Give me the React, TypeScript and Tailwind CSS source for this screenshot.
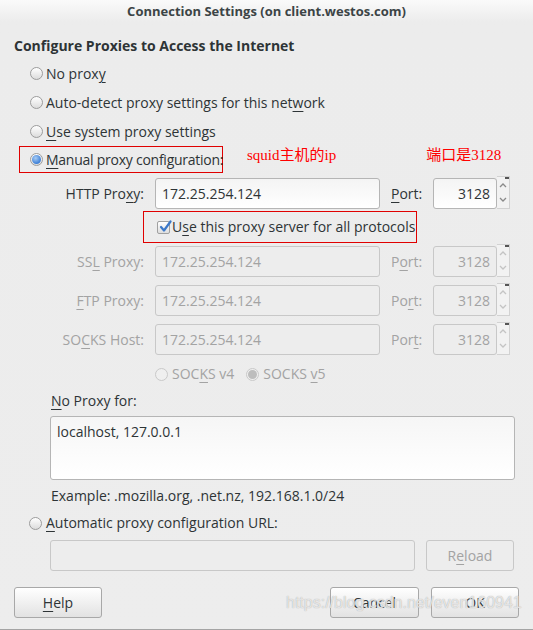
import React from 'react';

const dark = 'text-[#2e3436]';
const dim = 'text-[#a3a3a3]';

function U({ c }: { c: string }) {
  return <span className="underline underline-offset-[3px] decoration-1">{c}</span>;
}

function Radio({ on = false, off = false }: { on?: boolean; off?: boolean }) {
  return (
    <span className={`inline-flex w-[13px] h-[13px] shrink-0 rounded-full border items-center justify-center ${off ? 'border-[#c9c9c9] bg-[#efefef]' : 'border-[#9c9c9c] bg-gradient-to-b from-white to-[#dcdcdc]'}`}>
      {on && (
        <span className={`w-[9px] h-[9px] rounded-full ${off ? 'bg-[#bdbdbd]' : 'bg-[radial-gradient(circle_at_40%_35%,#a8cdf5,#3d7fd6_70%)]'}`} />
      )}
    </span>
  );
}

function Spin({ off = false }: { off?: boolean }) {
  const c = off ? '#c4c4c4' : '#8a8a8a';
  return (
    <div className="relative flex flex-col w-[13px] h-[33px] -mt-[2px] border border-l-0 border-[#d2d2d2] bg-[#f2f2f2]">
      <span className="absolute right-0 top-0 w-[4px] h-[2px] bg-[#555]" />
      <div className="flex-1 flex items-center justify-center">
        <svg width="8" height="6" viewBox="0 0 8 6"><path d="M1 5 L4 2 L7 5" fill="none" stroke={c} strokeWidth="1.3" /></svg>
      </div>
      <div className="flex-1 flex items-center justify-center">
        <svg width="8" height="6" viewBox="0 0 8 6"><path d="M1 1 L4 4 L7 1" fill="none" stroke={c} strokeWidth="1.3" /></svg>
      </div>
    </div>
  );
}

function FieldRow({ label, port, off = false, mt }: { label: React.ReactNode; port: React.ReactNode; off?: boolean; mt: string }) {
  const box = off
    ? 'border-[#c8c8c8] bg-[#ededed] text-[#a3a3a3]'
    : 'border-[#b5b5b5] bg-gradient-to-b from-[#f4f4f4] to-white text-[#2e3436]';
  return (
    <div className={`flex items-center h-[31px] ${mt}`}>
      <div className={`w-[144px] text-right whitespace-nowrap ${off ? dim : dark}`}>{label}</div>
      <div className={`ml-[11px] w-[225px] h-[31px] rounded-[3px] border flex items-center pl-[6px] ${box}`}>172.25.254.124</div>
      <div className={`ml-[11px] w-[42px] ${off ? dim : dark}`}>{port}</div>
      <div className={`w-[64px] h-[31px] rounded-[3px] border flex items-center justify-end pr-[6px] ${box}`}>3128</div>
      <Spin off={off} />
    </div>
  );
}

function Btn({ children, w, off = false }: { children: React.ReactNode; w: string; off?: boolean }) {
  return (
    <div className={`${w} h-[31px] rounded-[3px] border flex items-center justify-center ${off ? 'border-[#c8c8c8] bg-[#ededed] text-[#a3a3a3]' : 'border-[#a8a8a8] bg-gradient-to-b from-white to-[#e2e2e2] text-[#2e3436]'}`}>
      {children}
    </div>
  );
}

const redFont = { fontFamily: '"Liberation Serif", "Noto Sans CJK SC", serif' };

export default function App() {
  return (
    <div className="relative w-[533px] h-[630px] bg-[#ededed] overflow-hidden text-[14px] leading-[20px]" style={{ fontFamily: '"Open Sans", "Noto Sans", sans-serif' }}>
      {/* title bar */}
      <div className="h-[22px] bg-gradient-to-b from-[#fafafa] to-[#ececec] flex items-center justify-center">
        <span className="text-[13px] font-bold text-[#3c4446]">Connection Settings (on client.westos.com)</span>
      </div>
      <div className="bg-gradient-to-b from-[#ececec] to-[#ededed]">
        <div className={`h-[34px] pt-[14px] pl-[14px] font-bold ${dark}`}>Configure Proxies to Access the Internet</div>

        <div className={`mt-[3px] ${dark}`}>
          <div className="h-[29px] pl-[30px] flex items-center gap-[3px]"><Radio /><span>No prox<U c="y" /></span></div>
          <div className="h-[29px] pl-[30px] flex items-center gap-[3px]"><Radio /><span>Auto-detect proxy settings for this net<U c="w" />ork</span></div>
          <div className="h-[29px] pl-[30px] flex items-center gap-[3px]"><Radio /><span><U c="U" />se system proxy settings</span></div>
          <div className="h-[29px] pl-[19px] flex items-center">
            <div className="w-[204px] h-[27px] -mt-[2px] border border-[#e00000] pl-[10px] flex items-center gap-[3px] whitespace-nowrap">
              <Radio on /><span className="tracking-[-0.25px]"><U c="M" />anual proxy configuration:</span>
            </div>
            <span className="ml-[24px] -mt-[12px] text-[15px] text-[#ff0000]" style={redFont}>squid主机的ip</span>
            <span className="ml-[90px] -mt-[12px] text-[15px] text-[#ff0000]" style={redFont}>端口是3128</span>
          </div>
        </div>

        <FieldRow mt="mt-[3px]" label={<>HTTP Pro<U c="x" />y:</>} port={<><U c="P" />ort:</>} />
        <div className="mt-[2px] h-[32px] pl-[143px] flex">
          <div className={`w-[274px] h-[32px] border border-[#e00000] pl-[13px] flex items-center gap-[2px] ${dark}`}>
            <span className="relative w-[13px] h-[13px] border border-[#a0a0a0] rounded-[2px] bg-gradient-to-b from-white to-[#dedede] shrink-0">
              <svg className="absolute -top-[2px] left-[1px]" width="13" height="13" viewBox="0 0 13 13"><path d="M2 7 L5 10.5 L11.5 1.5" fill="none" stroke="#3b78c9" strokeWidth="2.2" strokeLinecap="round" strokeLinejoin="round" /></svg>
            </span>
            <span className="whitespace-nowrap">U<U c="s" />e this proxy server for all protocols</span>
          </div>
        </div>
        <FieldRow off mt="mt-[3px]" label={<>SS<U c="L" /> Proxy:</>} port={<>P<U c="o" />rt:</>} />
        <FieldRow off mt="mt-[8px]" label={<><U c="F" />TP Proxy:</>} port={<>Po<U c="r" />t:</>} />
        <FieldRow off mt="mt-[8px]" label={<>SO<U c="C" />KS Host:</>} port={<>Por<U c="t" />:</>} />

        <div className={`mt-[3px] h-[32px] pl-[155px] flex items-center ${dim}`}>
          <Radio off /><span className="ml-[4px]">SOC<U c="K" />S v4</span>
          <span className="ml-[12px] flex"><Radio on off /></span><span className="ml-[4px]">SOCKS <U c="v" />5</span>
        </div>

        <div className={`mt-[1px] h-[20px] pl-[51px] ${dark}`}><U c="N" />o Proxy for:</div>
        <div className="mt-[5px] ml-[50px] w-[465px] h-[64px] rounded-[3px] border border-[#b5b5b5] bg-gradient-to-b from-[#f6f6f6] to-white pl-[6px] pt-[5px] text-[#2e3436]">localhost, 127.0.0.1</div>
        <div className={`mt-[6px] h-[20px] pl-[51px] ${dark}`}>Example: .mozilla.org, .net.nz, 192.168.1.0/24</div>
        <div className={`mt-[7px] h-[20px] pl-[29px] flex items-center gap-[4px] ${dark}`}><Radio /><span><U c="A" />utomatic proxy configuration URL:</span></div>
        <div className="mt-[7px] pl-[50px] flex items-center">
          <div className="w-[365px] h-[31px] rounded-[3px] border border-[#c8c8c8] bg-[#ededed]" />
          <div className="ml-[11px]"><Btn w="w-[88px]" off>R<U c="e" />load</Btn></div>
        </div>

        <div className="mt-[16px] pl-[14px] flex items-center">
          <Btn w="w-[88px]"><U c="H" />elp</Btn>
          <div className="ml-[228px]"><Btn w="w-[89px]">Cancel</Btn></div>
          <div className="ml-[12px]"><Btn w="w-[88px]">OK</Btn></div>
        </div>
        <div className="mt-[11px] h-[1px] bg-[#a4a4a4]" />
      </div>

      <span className="absolute left-[286px] top-[593px] text-[16px] leading-[20px] text-white/70 [text-shadow:0_0_1px_#9a9a9a]" style={{ fontFamily: '"Liberation Sans", Arial, sans-serif' }}>https://blog.csdn.net/even160941</span>
    </div>
  );
}
